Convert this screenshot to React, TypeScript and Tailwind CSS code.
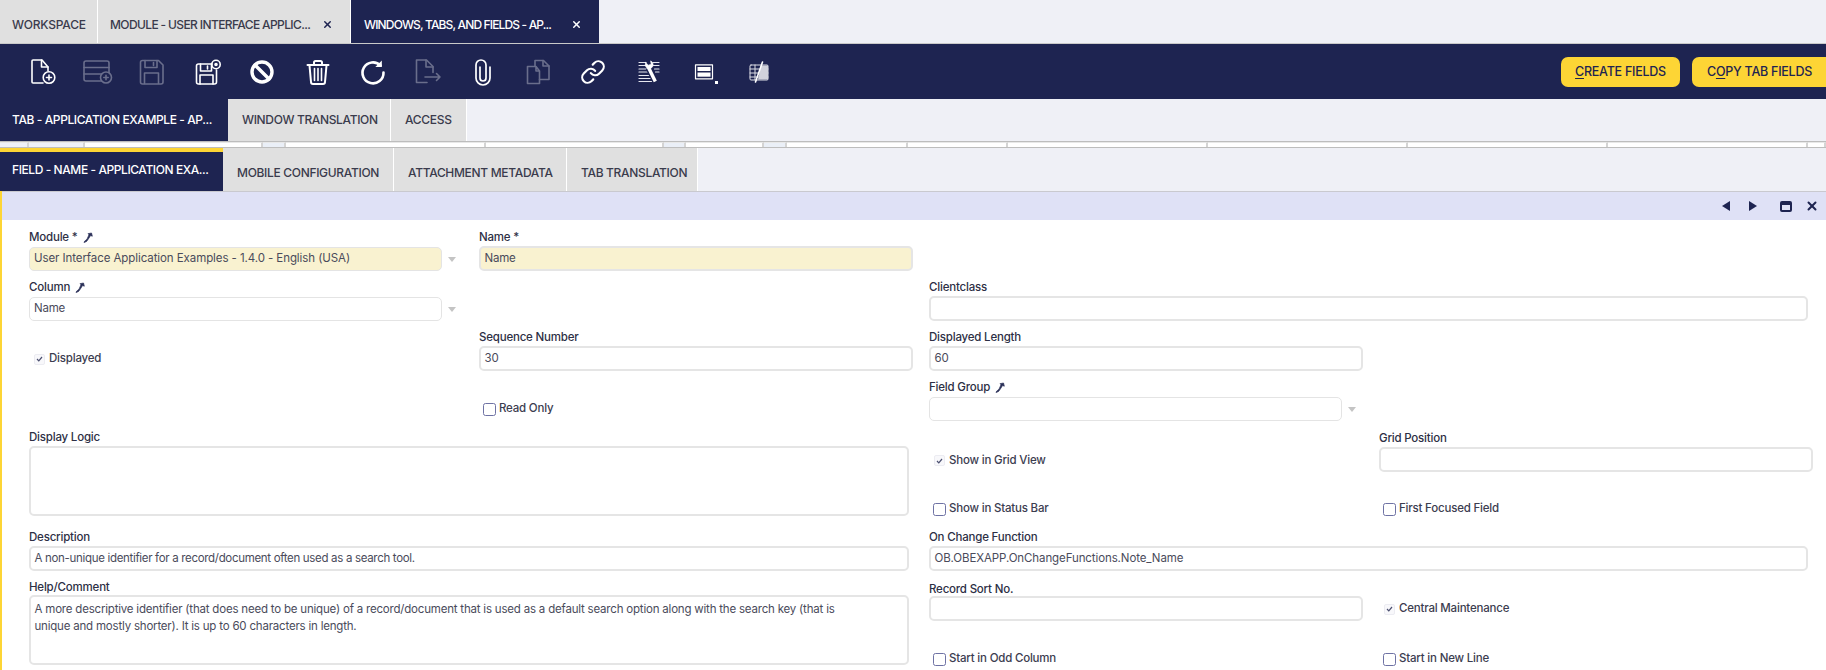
import type { ReactNode } from "react";
import { Link, X } from "lucide-react";

const NAVY = "#1e2451";
const DIM = "#6a6e8c";

function Ico({ c = "#fff", w = 1.6, children }: { c?: string; w?: number; children: ReactNode }) {
  return (
    <svg width="32" height="32" viewBox="0 0 32 32" fill="none" stroke={c} strokeWidth={w} strokeLinejoin="round" strokeLinecap="round">
      {children}
    </svg>
  );
}

const toolbarIcons: ReactNode[] = [
  <Ico key="new">
    <path d="M17 27H7a1 1 0 0 1-1-1V5a1 1 0 0 1 1-1h9l6 7v4" />
    <path d="M15.500 4v7H22" />
    <circle cx="23" cy="21.500" r="5.800" />
    <path d="M20.500 21.500h5M23 19v5" />
  </Ico>,
  <Ico key="grid-new" c={DIM}>
    <rect x="3" y="5" width="25" height="20" rx="2" />
    <path d="M3 11.500h25M3 18h19" />
    <circle cx="25" cy="21.500" r="5.500" fill={NAVY} />
    <path d="M22.800 21.500h4.400M25 19.300v4.400" />
  </Ico>,
  <Ico key="save-off" c={DIM}>
    <path d="M6.500 4.500h16l4.500 4.500v17a2 2 0 0 1-2 2H6.500a2 2 0 0 1-2-2v-19.500a2 2 0 0 1 2-2z" />
    <path d="M9 4.500v7h12v-7M17.500 6.500v3M8.500 27.500V17h14v10.500" />
  </Ico>,
  <Ico key="save">
    <path d="M21 8H7.500a2 2 0 0 0-2 2v16a2 2 0 0 0 2 2h16a2 2 0 0 0 2-2V14" />
    <path d="M9.500 8v7h11V8M16.500 10v3M9 28V19h13v9" />
    <circle cx="25" cy="8.500" r="4.200" />
    <circle cx="25" cy="8.500" r="1" fill="#fff" />
  </Ico>,
  <Ico key="ban" w={3.400}>
    <circle cx="16" cy="16" r="10" />
    <path d="M9 9l14 14" />
  </Ico>,
  <Ico key="trash">
    <path d="M5.500 9h21M12 8.500V6.500a1.500 1.500 0 0 1 1.500-1.500h5a1.500 1.500 0 0 1 1.500 1.500v2" strokeWidth={2} />
    <path d="M7.500 9.500l1.500 16.500a2 2 0 0 0 2 2h10a2 2 0 0 0 2-2l1.500-16.500" strokeWidth={2} />
    <path d="M12.500 12.500v12M16 12.500v12M19.500 12.500v12" />
  </Ico>,
  <Ico key="refresh" w={2.600}>
    <path d="M23.500 9.500a10.500 10.500 0 1 0 3 7" />
    <path d="M24.800 4.500v6.500h-6.500" strokeWidth={0} fill="#fff" />
  </Ico>,
  <Ico key="export" c={DIM}>
    <path d="M15 26.500H4.500V4h10l6.500 6.500v6" />
    <path d="M14 4v7h7M13 21h15M24.500 17.500l3.500 3.500-3.500 3.500" />
  </Ico>,
  <Ico key="clip" w={1.700}>
    <path d="M13 11v11a3 3 0 0 0 6 0V9a5 5 0 0 0-10 0v13a7 7 0 0 0 14 0V11" />
  </Ico>,
  <Ico key="copy" c={DIM}>
    <path d="M14 10.500H5.500v17h12V15zM14 10.500V15h3.500" />
    <path d="M13 10V4.500h8.500L27 10v13.500h-9.500" />
    <path d="M21 4.500V10h6" />
  </Ico>,
  <Link key="link" size={26} strokeWidth={2} color="#fff" />,
  <Ico key="tools" w={1.200} c="#e6e7ef">
    <path d="M6 6.500h7M6 9.500h7M6 13h8.500M6 16h10M6 19.500h12M6 22.500h14M6 25.500h14M20 6.500h6M20.500 9.500h5.500M21.500 13h4.500M22.500 16h3.500" />
    <path d="M15.500 12l7 14" stroke={NAVY} strokeWidth={6} strokeLinecap="butt" />
    <path d="M15.500 11.500l6.800 14" strokeWidth={3.400} stroke="#fff" strokeLinecap="butt" />
    <path d="M12.800 6.500l2.400 2.700 3-1-.6-3.300c2 .7 3 3 2.300 5.100-.7 2-2.900 3.200-5 2.500-2.300-.8-3.400-4-2.100-6z" fill="#fff" stroke="#fff" strokeWidth={0.600} />
  </Ico>,
  <div key="rows" className="relative">
    <Ico w={1.200}>
      <rect x="7.500" y="8.800" width="17" height="14" />
      <rect x="9.500" y="11" width="13" height="4" fill="#fff" strokeWidth={0} />
      <rect x="9.500" y="16.500" width="13" height="4.200" fill="#fff" strokeWidth={0} />
    </Ico>
    <span className="absolute left-[27px] top-[25px] h-[3px] w-[3px] bg-white" />
  </div>,
  <Ico key="note" w={1} c="#dcdde6">
    <rect x="7" y="9" width="18" height="15" rx="1" />
    <path d="M7 13h18M7 17h18M7 21h18M12 9v15" />
    <path d="M18 9.500h7v14h-10z" fill="#d0d1db" strokeWidth={0} />
    <path d="M19.500 6l-7 20" stroke="#fff" strokeWidth={1.600} />
  </Ico>,
];

function Tab({ label, w, active, close, cls = "pl-3 pr-3 tracking-[-0.2px]" }: { label: string; w: string; active?: boolean; close?: boolean; cls?: string }) {
  return (
    <div className={`${w} ${cls} flex h-full shrink-0 items-center justify-between text-[12px] font-medium whitespace-nowrap ${active ? "bg-[#1e2451] text-white" : "border-r border-white bg-[#e0e0e0] text-[#3a3b4c]"}`}>
      <span>{label}</span>
      {close && <X size={11} strokeWidth={3.200} color={active ? "#fff" : NAVY} />}
    </div>
  );
}

function Strip() {
  const cells: [string, string][] = [
    ["w-[29px]", "bg-[#eff1f8]"], ["w-[56px]", "bg-[#eff1f8]"], ["w-[178px]", "bg-white"], ["w-[23px]", "bg-[#eaeff7]"],
    ["w-[200px]", "bg-white"], ["w-[178px]", "bg-white"], ["w-[22px]", "bg-[#eaeff7]"], ["w-[78px]", "bg-white"],
    ["w-[23px]", "bg-[#eaeff7]"], ["w-[121px]", "bg-white"], ["w-[100px]", "bg-white"], ["w-[200px]", "bg-white"],
    ["w-[200px]", "bg-white"], ["w-[200px]", "bg-white"], ["w-[200px]", "bg-white"], ["w-[18px]", "bg-white"],
  ];
  return (
    <div className="flex h-[7px] shrink-0 overflow-hidden border-y border-[#bdbdbd]">
      {cells.map(([w, bg], i) => (
        <div key={i} className={`${w} ${bg} h-full shrink-0 border-r-2 border-[#d4d4d4] border-t border-t-[#e8e8e8]`} />
      ))}
    </div>
  );
}

function Pin() {
  return (
    <svg width="10" height="11" viewBox="0 0 10 11" fill="#2a2f58" stroke="#2a2f58" strokeWidth="0.700" className="ml-[5px] inline-block">
      <path d="M8.500 1l.8 3.200-1.700-.7L5 7.500 3.500 9.500 1 10.500l.6-1.300L4 7.200l2-4.500-1-1z" />
    </svg>
  );
}

function Label({ text, pin, cls = "" }: { text: string; pin?: boolean; cls?: string }) {
  return (
    <div className={`${cls} flex h-[14px] items-center text-[11.500px] leading-[14px] font-medium tracking-[-0.2px] whitespace-nowrap text-[#2d2f45]`}>
      {text}
      {pin && <Pin />}
    </div>
  );
}

function Input({ value, w, h = "h-[25px]", yellow, cls = "tracking-[-0.2px]" }: { value?: string; w: string; h?: string; yellow?: boolean; cls?: string }) {
  return (
    <div className={`${w} ${h} ${cls} ${yellow ? "bg-[#f9f2d0]" : "bg-white"} mt-[2px] flex items-center rounded-[5px] border-2 border-[#e5e5e5] pl-[3.500px] text-[11.500px] whitespace-nowrap text-[#4a4b5b]`}>
      {value}
    </div>
  );
}

function Select({ value, w, yellow, cls = "tracking-[-0.2px]" }: { value?: string; w: string; yellow?: boolean; cls?: string }) {
  return (
    <div className="mt-[3px] flex items-center">
      <div className={`${w} ${cls} ${yellow ? "bg-[#f9f2d0]" : "bg-white"} flex h-[24px] items-center rounded-[5px] border border-[#e4e4e4] pl-[4px] text-[11.500px] whitespace-nowrap text-[#4a4b5b]`}>
        {value}
      </div>
      <div className="ml-[6px] h-0 w-0 border-x-[4px] border-t-[5px] border-x-transparent border-t-[#c4c4c4]" />
    </div>
  );
}

function Check({ label, checked, cls = "pt-[8px]" }: { label: string; checked?: boolean; cls?: string }) {
  return (
    <div className={`${cls} flex h-[50px] items-center gap-[3px] pl-[4px] text-[11.500px] font-medium tracking-[-0.2px] whitespace-nowrap text-[#3c3d50]`}>
      {checked ? (
        <span className="ml-[1px] mr-[1px] flex h-[11px] w-[11px] items-center justify-center rounded-[2px] border border-[#ececf2] bg-[#f8f8fb]">
          <svg width="7" height="6" viewBox="0 0 7 6" fill="none" stroke="#4c5070" strokeWidth="1.200">
            <path d="M1 3l1.800 1.800L6 1" />
          </svg>
        </span>
      ) : (
        <span className="h-[13px] w-[13px] rounded-[2.500px] border border-[#6e72a4] bg-white" />
      )}
      <span>{label}</span>
    </div>
  );
}

export default function App() {
  return (
    <div className="flex h-[670px] w-[1826px] flex-col overflow-hidden bg-[#eff0f6] font-['Inter',sans-serif]">
      <div className="flex h-[44px] shrink-0 border-b border-[#c9c9c9]">
        <Tab label="WORKSPACE" w="w-[98px]" cls="pt-[6px] pl-3 pr-3 tracking-[-0.2px]" />
        <Tab label="MODULE - USER INTERFACE APPLIC..." w="w-[253px]" close cls="pt-[6px] pl-3 pr-[17px] tracking-[-0.62px]" />
        <Tab label="WINDOWS, TABS, AND FIELDS - AP..." w="w-[248px]" active close cls="pt-[6px] pl-[13px] pr-[17px] tracking-[-0.85px]" />
      </div>

      <div className="flex h-[55px] shrink-0 items-center justify-between bg-[#1e2451] pl-[14px]">
        <div className="flex">
          {toolbarIcons.map((icon, i) => (
            <div key={i} className="flex h-[32px] w-[55.200px] items-center justify-center">{icon}</div>
          ))}
        </div>
        <div className="flex items-center gap-[12px] text-[12.500px] font-medium tracking-[-0.25px] text-[#1e2451]">
          <button className="h-[30px] w-[119px] rounded-[7px] bg-[#fdd535] pt-[1px]">
            <u className="underline-offset-2">C</u>REATE FIELDS
          </button>
          <button className="h-[30px] w-[134px] rounded-l-[7px] bg-[#fdd535] pt-[1px] pl-[2px] text-left indent-[13px]">
            C<u className="underline-offset-2">O</u>PY TAB FIELDS
          </button>
        </div>
      </div>

      <div className="flex h-[42px] shrink-0">
        <Tab label="TAB - APPLICATION EXAMPLE - AP..." w="w-[228px]" active cls="pl-3 pr-3 tracking-[-0.4px]" />
        <Tab label="WINDOW TRANSLATION" w="w-[163px]" cls="pl-[14px] pr-2 tracking-[-0.35px]" />
        <Tab label="ACCESS" w="w-[76px]" cls="pl-[14px] pr-2 tracking-[-0.3px]" />
      </div>

      <Strip />

      <div className="flex h-[43px] shrink-0">
        <div className="w-[223px] shrink-0 border-t-4 border-[#fdd535] bg-[#1e2451]">
          <div className="flex h-full items-center pb-[3px] pl-[12px] text-[12px] font-medium tracking-[-0.42px] whitespace-nowrap text-white">FIELD - NAME - APPLICATION EXA...</div>
        </div>
        <Tab label="MOBILE CONFIGURATION" w="w-[171px]" cls="pt-[7px] pl-[14px] pr-2 tracking-[-0.32px]" />
        <Tab label="ATTACHMENT METADATA" w="w-[173px]" cls="pt-[7px] pl-[14px] pr-2 tracking-[-0.32px]" />
        <Tab label="TAB TRANSLATION" w="w-[131px]" cls="pt-[7px] pl-[14px] pr-2 tracking-[-0.32px]" />
      </div>

      <div className="flex min-h-0 flex-1 border-l-2 border-[#fdd535]">
        <div className="min-w-0 flex-1">
          <div className="flex h-[29px] items-center justify-end gap-[13px] border-t border-[#c9c9cf] bg-[#dfe1f6] pr-[7px]">
            <div className="h-0 w-0 border-y-[5px] border-r-[8px] border-y-transparent border-r-[#1e2451]" />
            <div className="ml-[6px] h-0 w-0 border-y-[5px] border-l-[8px] border-y-transparent border-l-[#1e2451]" />
            <div className="ml-[10px] h-[11px] w-[12px] rounded-[2px] border-[2px] border-t-[4px] border-[#1e2451]" />
            <X size={14} strokeWidth={3.400} color={NAVY} />
          </div>

          <div className="grid auto-rows-[50px] grid-cols-[450px_450px_450px_1fr] bg-white pt-[10px] pl-[27px]">
            <div><Label text="Module *" pin /><Select value="User Interface Application Examples - 1.4.0 - English (USA)" w="w-[413px]" yellow cls="tracking-[-0.08px]" /></div>
            <div><Label text="Name *" /><Input value="Name" w="w-[434px]" yellow /></div>
            <div className="col-span-2" />

            <div><Label text="Column" pin /><Select value="Name" w="w-[413px]" /></div>
            <div />
            <div className="col-span-2"><Label text="Clientclass" /><Input w="w-[879px]" /></div>

            <Check label="Displayed" checked />
            <div><Label text="Sequence Number" /><Input value="30" w="w-[434px]" /></div>
            <div><Label text="Displayed Length" /><Input value="60" w="w-[434px]" /></div>
            <div />

            <div />
            <Check label="Read Only" />
            <div><Label text="Field Group" pin /><Select w="w-[413px]" /></div>
            <div />

            <div className="col-span-2 row-span-2"><Label text="Display Logic" /><Input w="w-[880px]" h="h-[70px]" /></div>
            <Check label="Show in Grid View" checked cls="pt-[11px]" />
            <div className="pt-[1px]"><Label text="Grid Position" /><Input w="w-[434px]" /></div>
            <Check label="Show in Status Bar" />
            <Check label="First Focused Field" />

            <div className="col-span-2"><Label text="Description" /><Input value="A non-unique identifier for a record/document often used as a search tool." w="w-[880px]" cls="tracking-[-0.32px]" /></div>
            <div className="col-span-2"><Label text="On Change Function" /><Input value="OB.OBEXAPP.OnChangeFunctions.Note_Name" w="w-[879px]" cls="tracking-[-0.1px]" /></div>

            <div className="col-span-2 row-span-2">
              <Label text="Help/Comment" />
              <div className="mt-[1px] h-[70px] w-[880px] rounded-[5px] border-2 border-[#e5e5e5] pt-[4px] pl-[3.500px] text-[11.500px] leading-[17px] tracking-[-0.2px] text-[#4a4b5b]">
                A more descriptive identifier (that does need to be unique) of a record/document that is used as a default search option along with the search key (that is
                <br />
                unique and mostly shorter). It is up to 60 characters in length.
              </div>
            </div>
            <div><Label text="Record Sort No." cls="mt-[2px] -mb-[2px]" /><Input w="w-[434px]" /></div>
            <Check label="Central Maintenance" checked />
            <Check label="Start in Odd Column" />
            <Check label="Start in New Line" />
          </div>
        </div>
      </div>
    </div>
  );
}
